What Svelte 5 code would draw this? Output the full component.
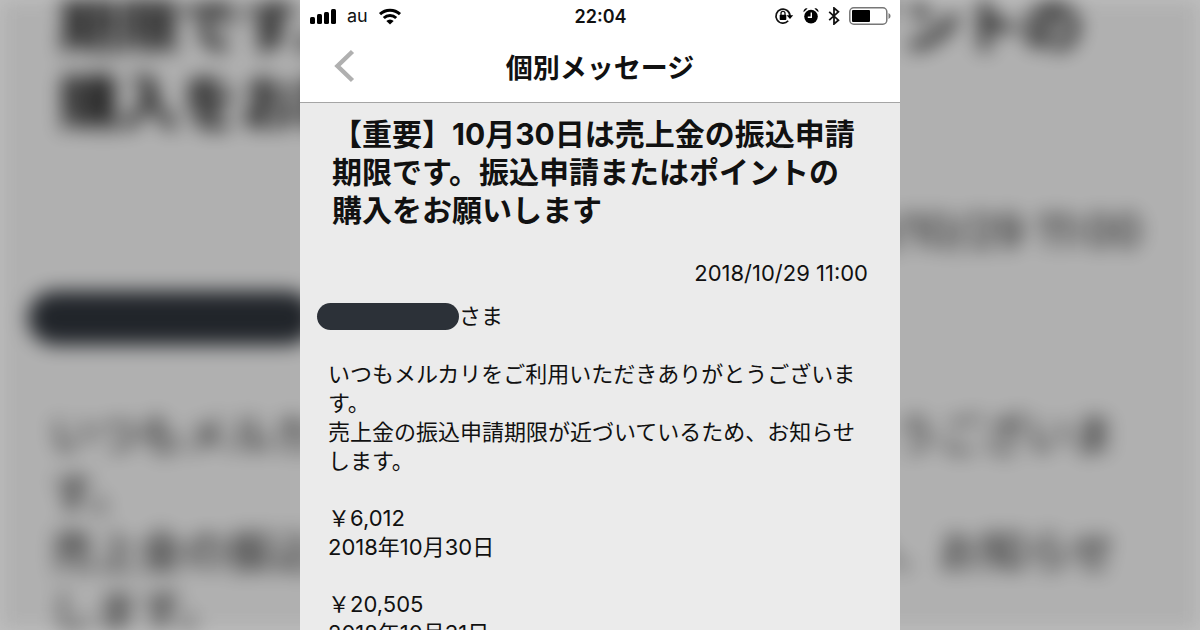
<script>
    const title = '【重要】10月30日は売上金の振込申請期限です。振込申請またはポイントの購入をお願いします';
    const sentAt = '2018/10/29 11:00';
    const intro = [
        'いつもメルカリをご利用いただきありがとうございます。',
        '売上金の振込申請期限が近づいているため、お知らせします。'
    ];
    const deadlines = [
        { amount: '￥6,012', date: '2018年10月30日' },
        { amount: '￥20,505', date: '2018年10月31日' }
    ];
    const bars = [7, 10, 12, 15];
</script>

{#snippet message()}
    <article class="message">
        <h2>{title}</h2>
        <time class="sent">{sentAt}</time>
        <div class="to"><span class="name"></span>さま</div>
        <div class="text">
            <div>
                {#each intro as line}
                    <p>{line}</p>
                {/each}
            </div>
            {#each deadlines as item}
                <div>
                    <p>{item.amount}</p>
                    <p>{item.date}</p>
                </div>
            {/each}
        </div>
    </article>
{/snippet}

<div class="page">
    <div class="backdrop" aria-hidden="true" inert>
        <div class="enlarged">{@render message()}</div>
    </div>

    <main class="phone">
        <header>
            <div class="status">
                <div class="side">
                    <svg width="28" height="17" viewBox="0 0 28 17">
                        {#each bars as h, i}
                            <rect x={i * 7 + 1} y={16 - h} width="5" height={h} rx="1.5" />
                        {/each}
                    </svg>
                    <span class="carrier">au</span>
                    <svg width="24" height="17" viewBox="0 0 24 17">
                        <path d="M2 6.2a14.4 14.4 0 0 1 20 0M5.8 10a9 9 0 0 1 12.4 0" fill="none" stroke="#000" stroke-width="3" />
                        <path d="M12 16.5 8.3 12.9a5.3 5.3 0 0 1 7.4 0z" />
                    </svg>
                </div>
                <time class="clock">22:04</time>
                <div class="side right">
                    <svg width="20" height="18" viewBox="0 0 20 18">
                        <path d="M14.2 13.8A7 7 0 1 1 16 9" fill="none" stroke="#111" stroke-width="1.7" />
                        <path d="M12.6 8.2h6.6L16 12z" />
                        <rect x="5.7" y="7.8" width="6.6" height="5.2" rx=".7" />
                        <path d="M7 8V6.3a2 2 0 0 1 4 0V8" fill="none" stroke="#111" stroke-width="1.3" />
                    </svg>
                    <svg width="16" height="18" viewBox="0 0 16 18">
                        <circle cx="8" cy="9.6" r="6.8" />
                        <path d="M.6 5.2a3 3 0 0 1 4-3.6zM15.4 5.2a3 3 0 0 0-4-3.6z" />
                        <path d="M8.3 5.4v4.8H4.8" fill="none" stroke="#fff" stroke-width="1.4" />
                    </svg>
                    <svg width="12" height="18" viewBox="0 0 12 18">
                        <path d="M1.2 4.8l9.2 8.4L6 17V1l4.4 3.8-9.2 8.4" fill="none" stroke="#111" stroke-width="1.8" />
                    </svg>
                    <svg width="43" height="18" viewBox="0 0 43 18">
                        <rect x=".8" y=".8" width="37" height="16.4" rx="4" fill="#fff" stroke="#777" stroke-width="1.5" />
                        <rect x="3" y="3" width="18" height="12" rx="1" />
                        <path d="M39.5 6a3.2 3.2 0 0 1 0 6z" fill="#777" />
                    </svg>
                </div>
            </div>
            <div class="nav">
                <button aria-label="戻る">
                    <svg width="22" height="34" viewBox="0 0 22 34">
                        <path d="M18.5 2.5 3.5 17l15 14.5" fill="none" stroke="#b0b0b0" stroke-width="4.5" />
                    </svg>
                </button>
                <h1>個別メッセージ</h1>
            </div>
        </header>
        {@render message()}
    </main>
</div>

<style>
    :global(body) {
        margin: 0;
    }

    .page {
        position: relative;
        display: flex;
        justify-content: center;
        height: 100vh;
        overflow: hidden;
        background: #c0c0c0;
        color: #111;
        font-family: Inter, "Noto Sans CJK JP", sans-serif;
    }

    .backdrop {
        position: absolute;
        inset: 0;
        overflow: hidden;
        background: #ebebeb;
        filter: blur(10px) brightness(.75);
    }

    .enlarged {
        zoom: 2.02;
        margin: -56px -3px 0;
    }

    .phone {
        position: relative;
        width: 50%;
        min-width: 600px;
        overflow: hidden;
        background: #ebebeb;
    }

    header {
        background: #fff;
        border-bottom: 1px solid #a5a5a5;
    }

    .status {
        display: grid;
        grid-template-columns: 1fr auto 1fr;
        align-items: center;
        height: 32px;
        padding: 0 8px 0 9px;
    }

    .side {
        display: flex;
        align-items: center;
        gap: 10px;
    }

    .right {
        justify-content: flex-end;
        gap: 9px;
    }

    .carrier {
        font-size: 18px;
        line-height: 20px;
    }

    .clock {
        font-size: 18px;
        font-weight: 600;
    }

    .nav {
        display: grid;
        grid-template-columns: 64px 1fr 64px;
        align-items: center;
        height: 66px;
        padding-top: 4px;
    }

    button {
        display: flex;
        justify-content: flex-end;
        padding: 0 8px 6px 0;
        border: 0;
        background: none;
    }

    h1 {
        margin: 0;
        font-size: 27px;
        line-height: 40px;
        font-weight: 600;
        text-align: center;
    }

    .message {
        display: flex;
        flex-direction: column;
        padding-top: 12px;
    }

    h2 {
        margin: 0 32px;
        font-size: 30px;
        line-height: 38px;
        font-weight: 700;
    }

    .sent {
        margin: 30px 32px 0;
        font-size: 22px;
        line-height: 29px;
        text-align: right;
    }

    .to {
        display: flex;
        align-items: center;
        margin: 14px 17px 0;
        font-size: 22px;
        line-height: 29px;
    }

    .name {
        width: 142px;
        height: 27px;
        border-radius: 14px;
        background: #2c3138;
    }

    .text {
        display: flex;
        flex-direction: column;
        gap: 28px;
        margin: 29px 28px 0;
        font-size: 22px;
        line-height: 29px;
    }

    p {
        margin: 0;
    }
</style>
